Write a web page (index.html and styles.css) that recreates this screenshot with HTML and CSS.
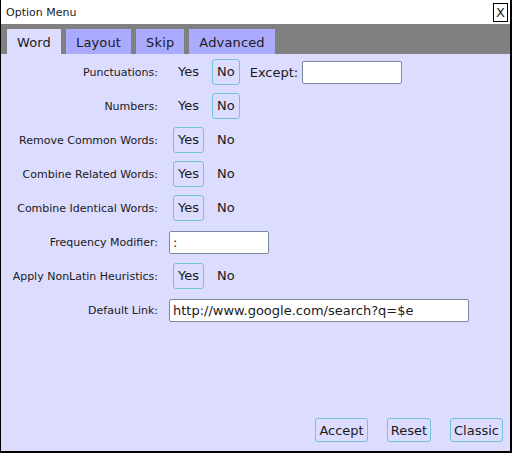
FILE: index.html
```html
<!DOCTYPE html>
<html>
<head>
<meta charset="utf-8">
<link rel="stylesheet" href="styles.css">
</head>
<body>
<div class="window">
  <div class="titlebar">
    <span class="title">Option Menu</span>
    <span class="close">X</span>
  </div>
  <div class="tabbar">
    <div class="tab active">Word</div>
    <div class="tab">Layout</div>
    <div class="tab">Skip</div>
    <div class="tab">Advanced</div>
  </div>
  <div class="content">
    <div class="form">
      <div class="label">Punctuations:</div>
      <div class="value">
        <span class="opt">Yes</span><span class="opt sel">No</span>
        <span class="sub">Except:</span><input class="field short" type="text" value="">
      </div>
      <div class="label">Numbers:</div>
      <div class="value"><span class="opt">Yes</span><span class="opt sel">No</span></div>
      <div class="label">Remove Common Words:</div>
      <div class="value"><span class="opt sel">Yes</span><span class="opt">No</span></div>
      <div class="label">Combine Related Words:</div>
      <div class="value"><span class="opt sel">Yes</span><span class="opt">No</span></div>
      <div class="label">Combine Identical Words:</div>
      <div class="value"><span class="opt sel">Yes</span><span class="opt">No</span></div>
      <div class="label">Frequency Modifier:</div>
      <div class="value"><input class="field mid" type="text" value=":"></div>
      <div class="label">Apply NonLatin Heuristics:</div>
      <div class="value"><span class="opt sel">Yes</span><span class="opt">No</span></div>
      <div class="label">Default Link:</div>
      <div class="value"><input class="field long" type="text" value="http://www.google.com/search?q=$e"></div>
    </div>
    <div class="footer">
      <button class="btn">Accept</button>
      <button class="btn">Reset</button>
      <button class="btn">Classic</button>
    </div>
  </div>
</div>
</body>
</html>
```
FILE: styles.css
```css
html, body {
  margin: 0;
  padding: 0;
  background: #ffffff;
}
body {
  font-family: "DejaVu Sans", Verdana, sans-serif;
  color: #1a1a1a;
}
.window {
  width: 509px;
  height: 451px;
  border-left: 1px solid #000;
  border-right: 2px solid #000;
  border-bottom: 2px solid #000;
  display: flex;
  flex-direction: column;
  background: #dcdcff;
}
.titlebar {
  height: 24px;
  background: #ffffff;
  display: flex;
  align-items: center;
  justify-content: space-between;
  padding: 0 2px 0 5px;
  font-size: 11px;
}
.close {
  width: 13px;
  height: 17px;
  border: 1px solid #000;
  display: flex;
  align-items: center;
  justify-content: center;
  font-size: 13px;
  line-height: 1;
}
.tabbar {
  height: 30px;
  box-sizing: border-box;
  background: #808080;
  display: flex;
  align-items: flex-end;
  gap: 5px;
  padding-left: 6px;
}
.tab {
  height: 25px;
  box-sizing: border-box;
  padding: 0 10px;
  background: #aaaaff;
  font-size: 13px;
  line-height: 27px;
  letter-spacing: 0.15px;
}
.tab.active {
  background: #dcdcff;
}
.content {
  flex: 1;
  display: flex;
  flex-direction: column;
  padding-top: 1px;
}
.form {
  display: grid;
  grid-template-columns: 157px 1fr;
  grid-auto-rows: 34px;
  column-gap: 11px;
}
.label {
  font-size: 11px;
  text-align: right;
  align-self: center;
}
.value {
  display: flex;
  align-items: center;
  font-size: 13px;
}
.opt {
  border: 1px solid transparent;
  border-radius: 3px;
  padding: 4px 4px;
  line-height: 16px;
  margin-left: 4px;
}
.opt + .opt {
  margin-left: 8px;
}
.opt.sel {
  border-color: #70c4d6;
}
.sub {
  margin-left: 10px;
  margin-right: 4px;
}
.field {
  height: 23px;
  box-sizing: border-box;
  border: 1px solid #7a8a9a;
  border-radius: 2px;
  background: #ffffff;
  font-family: "DejaVu Sans", Verdana, sans-serif;
  font-size: 13px;
  padding: 0 3px;
  color: #1a1a1a;
}
.field.short { width: 100px; }
.field.mid { width: 100px; }
.field.long { width: 300px; }
.footer {
  margin-top: auto;
  display: flex;
  justify-content: flex-end;
  gap: 19px;
  padding: 0 7px 9px 0;
}
.btn {
  height: 24px;
  box-sizing: border-box;
  border: 1px solid #70c4d6;
  border-radius: 3px;
  background: transparent;
  font-family: "DejaVu Sans", Verdana, sans-serif;
  font-size: 13px;
  color: #1a1a1a;
  padding: 0 3px;
}
```
